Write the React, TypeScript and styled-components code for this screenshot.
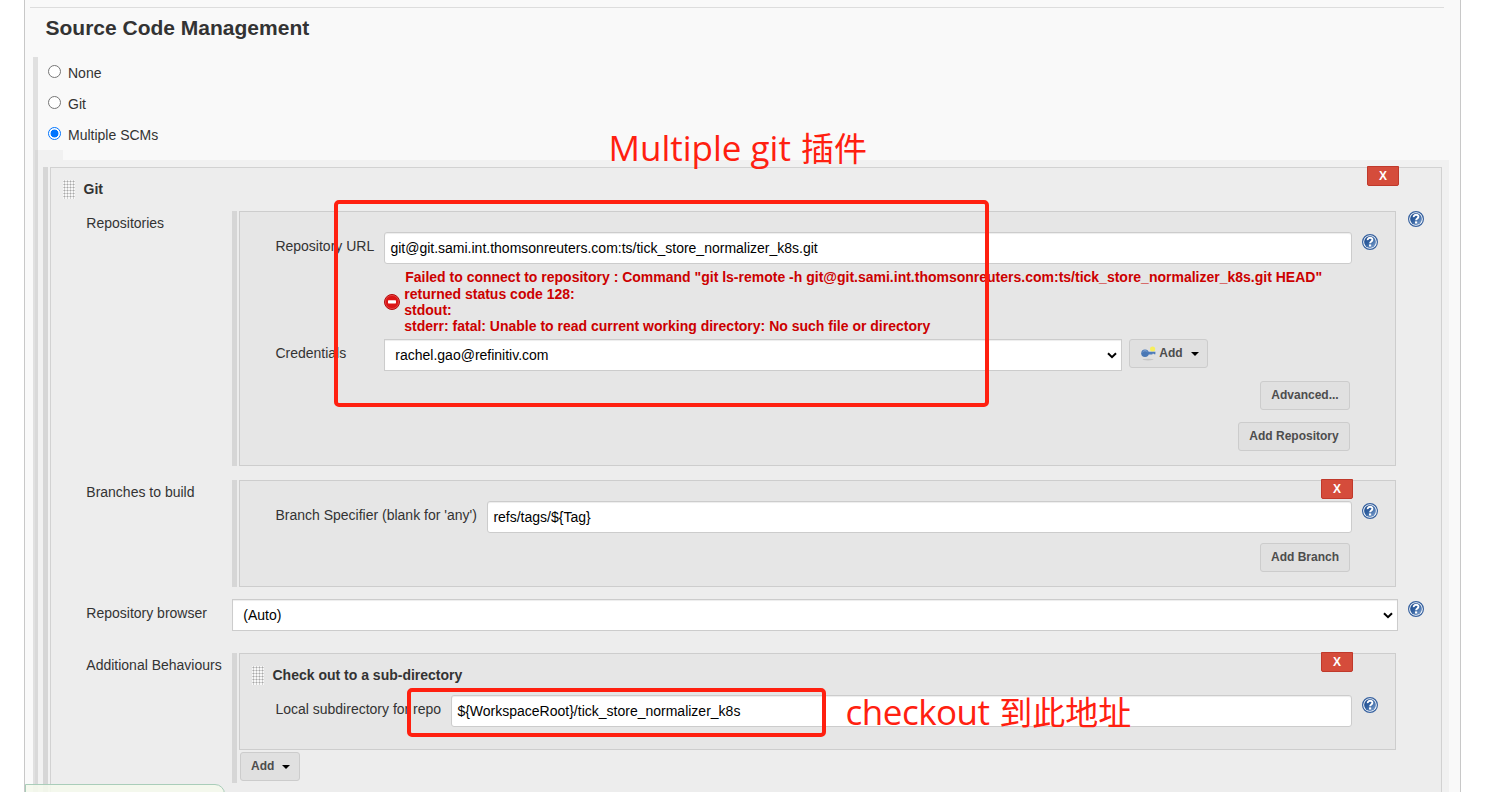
import React from "react";
import styled, { createGlobalStyle, css } from "styled-components";

const Global = createGlobalStyle`
  *, *::before, *::after { box-sizing: border-box; }
  html, body { margin: 0; background: #fff; }
  body {
    font-family: "Liberation Sans", Arial, sans-serif;
    font-size: 14px;
    line-height: 16px;
    color: #333;
    height: 792px;
    overflow: hidden;
  }
`;

const Screen = styled.div`
  position: relative;
  width: 1492px;
  height: 792px;
  overflow: hidden;
  padding: 0 31px 0 24px;
`;

const Panel = styled.main`
  height: 792px;
  overflow: hidden;
  background: #f9f9f9;
  border: solid #c8c8c8;
  border-width: 0 1px;
  padding: 7px 11px 0 5px;
`;

const Rule = styled.hr`
  margin: 0 5px 0 0;
  border: 0;
  height: 1px;
  background: #ddd;
`;

const Title = styled.h2`
  margin: 7px 0 17px 15.5px;
  font-size: 21px;
  line-height: 25px;
  font-weight: bold;
`;

const ScmSection = styled.section`
  margin-left: 3px;
  height: 760px;
  border-left: 5px solid #e0e0e0;
`;

const RadioRow = styled.label`
  display: flex;
  height: 31px;
  padding: 8px 0 0 10px;
  gap: 7px;
`;

const Radio = styled.input`
  appearance: none;
  width: 13px;
  height: 13px;
  margin: 0;
  border: 1px solid #767676;
  border-radius: 50%;
  background: #fff;
  &:checked {
    border-color: #0075ff;
    background: radial-gradient(circle, #0075ff 0 3.6px, #fff 4.3px);
  }
`;

const Nested = styled.div`
  margin-left: -3px;
  width: 1414px;
`;

const NestedLip = styled.div`
  width: 28px;
  height: 10px;
  background: rgba(0, 0, 0, 0.03);
`;

const NestedBody = styled.div`
  display: flex;
  gap: 2px;
  height: 700px;
  padding: 7px 7px 0 8px;
  background: rgba(0, 0, 0, 0.03);
`;

const DragBar = styled.div`
  width: 5px;
  flex: none;
  background: #d6d6d6;
`;

const ScmBox = styled.div`
  flex: 1;
  border: 1px solid #d2d2d2;
  background: #ededed;
  padding: 0 17px 0 12px;
`;

const BoxHeader = styled.div<{ $inner?: boolean }>`
  display: flex;
  align-items: flex-start;
  height: ${(p) => (p.$inner ? 41 : 43)}px;
  padding-top: 12px;
  ${(p) => p.$inner && css`margin-left: -23px;`}
`;

const HeaderTitle = styled.b`
  margin: 1px auto 0 8.5px;
`;

const Grip = styled.span`
  width: 12px;
  height: 19px;
  background: radial-gradient(circle at 1.5px 1.5px, #a8a8a8 0 0.9px, #f8f8f8 1.1px) 0 0 / 3px 3px;
`;

const DeleteButton = styled.button<{ $top: number; $right: number }>`
  flex: none;
  width: 32px;
  height: 20px;
  margin: ${(p) => p.$top}px ${(p) => p.$right}px 0 auto;
  padding: 0 0 1px;
  border: 1px solid #c0392b;
  border-radius: 0 0 2px 2px;
  background: #d54c3b;
  color: #fff;
  font: bold 12px/16px "Liberation Sans", Arial, sans-serif;
`;

const Entry = styled.div<{ $gap?: number }>`
  display: flex;
  align-items: flex-start;
  margin-bottom: ${(p) => p.$gap ?? 0}px;
`;

const EntryLabel = styled.div<{ $top?: number }>`
  width: 169px;
  flex: none;
  padding: ${(p) => p.$top ?? 4}px 0 0 23.3px;
  white-space: nowrap;
`;

const Repeatable = styled.div<{ $height: number }>`
  display: flex;
  width: 1164px;
  gap: 2px;
  height: ${(p) => p.$height}px;
`;

const Stack = styled.div`
  flex: 1;
`;

const InnerBox = styled.div<{ $height: number; $top?: number }>`
  height: ${(p) => p.$height}px;
  border: 1px solid #cdcdcd;
  background: #e6e6e6;
  padding: ${(p) => p.$top ?? 0}px 17px 0 35px;
`;

const Field = styled.div`
  display: flex;
  align-items: flex-start;
`;

const DeleteRow = styled.div`
  display: flex;
  height: 20px;
`;

const FieldLabel = styled.label<{ $width: number }>`
  width: ${(p) => p.$width}px;
  flex: none;
  padding: 6px 0 0 0.4px;
  white-space: nowrap;
`;

const TextBox = styled.input`
  flex: 1;
  min-width: 0;
  height: 32px;
  border: 1px solid #ccc;
  border-radius: 3px;
  box-shadow: inset 0 1px 1px rgba(0, 0, 0, 0.075);
  padding: 0 6px 1px 5.4px;
  background: #fff;
  color: #000;
  font: 14px "Liberation Sans", Arial, sans-serif;
`;

const SelectBox = styled.div<{ $width: number }>`
  display: flex;
  align-items: center;
  justify-content: space-between;
  width: ${(p) => p.$width}px;
  height: 32px;
  flex: none;
  border: 1px solid #ccc;
  box-shadow: inset 0 1px 1px rgba(0, 0, 0, 0.075);
  background: #fff;
  color: #000;
  padding: 0 4px 0 10.3px;
`;

const HelpSlot = styled.span<{ $left: number; $top: number }>`
  width: 16px;
  height: 16px;
  flex: none;
  margin: ${(p) => p.$top}px 0 0 ${(p) => p.$left}px;
  svg { display: block; }
`;

const ErrorRow = styled.div`
  display: flex;
  align-items: flex-start;
  height: 75px;
  padding: 5px 0 0 109px;
  gap: 4.3px;
  color: #c00;
  font-weight: bold;
  line-height: 16px;
  svg { flex: none; margin-top: 25px; }
`;

const ErrorText = styled.div`
  white-space: nowrap;
  div:first-child { line-height: 17px; }
`;

const FirstLine = styled.div`
  padding-left: 0.9px;
`;

const Button = styled.button`
  display: flex;
  align-items: center;
  height: 29px;
  flex: none;
  border: 1px solid #ccc;
  border-radius: 3px;
  background: #e0e0e0;
  color: #4d4d4d;
  font: bold 12px/16px "Liberation Sans", Arial, sans-serif;
  padding: 0 10px 2px;
  white-space: nowrap;
  svg { flex: none; }
`;

const WideButton = styled(Button)<{ $width: number }>`
  width: ${(p) => p.$width}px;
  justify-content: center;
`;

const KeyAddButton = styled(Button)`
  width: 79px;
  margin-left: 7px;
`;

const AddButton = styled(Button)`
  width: 60px;
  margin: 2px 0 0 1px;
`;

const ButtonRow = styled.div<{ $top: number }>`
  display: flex;
  justify-content: flex-end;
  padding: ${(p) => p.$top}px 28px 0 0;
`;

const Caret = styled.span`
  margin: 3px 0 0 8px;
  border: solid transparent;
  border-width: 4px 4px 0;
  border-top-color: #000;
`;

const StatusBar = styled.div`
  position: absolute;
  left: 25px;
  top: 784px;
  width: 200px;
  height: 20px;
  border: 1px solid #a9cdb9;
  border-radius: 0 10px 0 0;
  background: rgba(244, 248, 236, 0.9);
`;

const Frame = styled.div<{ $x: number; $y: number; $w: number; $h: number }>`
  position: absolute;
  left: ${(p) => p.$x}px;
  top: ${(p) => p.$y}px;
  width: ${(p) => p.$w}px;
  height: ${(p) => p.$h}px;
  border: 4px solid #ff2010;
  border-radius: 5px;
`;

const Note = styled.div<{ $x: number; $y: number; $tracking: number }>`
  position: absolute;
  left: ${(p) => p.$x}px;
  top: ${(p) => p.$y}px;
  color: #ff2010;
  font: 35px/44px "Open Sans", "Noto Sans CJK SC", sans-serif;
  letter-spacing: ${(p) => p.$tracking}px;
  white-space: nowrap;
`;

const Cjk = styled.span`
  font-family: "Noto Sans CJK SC", sans-serif;
  font-size: 33px;
  letter-spacing: 0;
  margin-left: 1px;
`;

function HelpIcon({ left, top = 2 }: { left: number; top?: number }) {
  return (
    <HelpSlot $left={left} $top={top}>
      <svg width="16" height="16" viewBox="0 0 16 16">
        <defs>
          <linearGradient id="help" x1="0" y1="0" x2="1" y2="1">
            <stop offset="0" stopColor="#1f4a8c" />
            <stop offset="0.45" stopColor="#31609f" />
            <stop offset="1" stopColor="#86a8d4" />
          </linearGradient>
        </defs>
        <circle cx="8" cy="8" r="7.4" fill="#fff" stroke="#36619f" strokeWidth="1.2" />
        <circle cx="8" cy="8" r="5.9" fill="url(#help)" />
        <path d="M5.7 6.1C5.5 3 10.7 3 10.4 5.9C10.3 7.5 8.1 7.4 8.1 9.3" fill="none" stroke="#fff" strokeWidth="1.9" />
        <rect x="7" y="10.4" width="2.2" height="2.1" fill="#fff" />
      </svg>
    </HelpSlot>
  );
}

function StopIcon() {
  return (
    <svg width="16" height="16" viewBox="0 0 16 16">
      <circle cx="8" cy="8" r="7.5" fill="#db1414" stroke="#b30d0d" />
      <circle cx="8" cy="8" r="6.6" fill="none" stroke="#e85a5a" strokeWidth="0.6" />
      <rect x="4" y="6.2" width="8" height="3.2" rx="0.6" fill="#fff" />
    </svg>
  );
}

function KeyIcon() {
  return (
    <svg width="16" height="16" viewBox="0 0 16 16">
      <ellipse cx="8" cy="14.6" rx="5.5" ry="0.8" fill="#c6c6c6" />
      <circle cx="12.6" cy="4" r="2.6" fill="#f6ee5c" />
      <path d="M7 6.8H15.4V9.2H14V8.8H12.4V9.6H7Z" fill="#4f7dbb" />
      <circle cx="5" cy="8.2" r="3.8" fill="#4a78b5" />
      <path d="M2.6 7C3.6 5.4 6.2 5.2 7.4 6.8" stroke="#84a8d8" fill="none" />
    </svg>
  );
}

function Chevron() {
  return (
    <svg width="10" height="7" viewBox="0 0 10 7">
      <path d="M1 1.2L5 5.2L9 1.2" fill="none" stroke="#000" strokeWidth="2" />
    </svg>
  );
}

export default function App() {
  return (
    <Screen>
      <Global />
      <Panel>
        <Rule />
        <Title>Source Code Management</Title>
        <ScmSection>
          {["None", "Git", "Multiple SCMs"].map((name) => (
            <RadioRow key={name}>
              <Radio type="radio" name="scm" defaultChecked={name === "Multiple SCMs"} />
              <span>{name}</span>
            </RadioRow>
          ))}
          <Nested>
            <NestedLip />
            <NestedBody>
              <DragBar />
              <ScmBox>
                <BoxHeader>
                  <Grip />
                  <HeaderTitle>Git</HeaderTitle>
                  <DeleteButton $top={-14} $right={25}>X</DeleteButton>
                </BoxHeader>

                <Entry $gap={14}>
                  <EntryLabel>Repositories</EntryLabel>
                  <Repeatable $height={255}>
                    <DragBar />
                    <Stack>
                      <InnerBox $height={255} $top={20}>
                        <Field>
                          <FieldLabel $width={109}>Repository URL</FieldLabel>
                          <TextBox defaultValue="git@git.sami.int.thomsonreuters.com:ts/tick_store_normalizer_k8s.git" />
                          <HelpIcon left={10} />
                        </Field>
                        <ErrorRow>
                          <StopIcon />
                          <ErrorText>
                            <FirstLine>
                              Failed to connect to repository : Command "git ls-remote -h git@git.sami.int.thomsonreuters.com:ts/tick_store_normalizer_k8s.git HEAD"
                            </FirstLine>
                            <div>returned status code 128:</div>
                            <div>stdout:</div>
                            <div>stderr: fatal: Unable to read current working directory: No such file or directory</div>
                          </ErrorText>
                        </ErrorRow>
                        <Field>
                          <FieldLabel $width={109}>Credentials</FieldLabel>
                          <SelectBox $width={738}>rachel.gao@refinitiv.com<Chevron /></SelectBox>
                          <KeyAddButton><KeyIcon /><span>&nbsp;Add</span><Caret /></KeyAddButton>
                        </Field>
                        <ButtonRow $top={10}><WideButton $width={90}>Advanced...</WideButton></ButtonRow>
                        <ButtonRow $top={12}><WideButton $width={112}>Add Repository</WideButton></ButtonRow>
                      </InnerBox>
                    </Stack>
                  </Repeatable>
                  <HelpIcon left={12} top={0} />
                </Entry>

                <Entry $gap={12}>
                  <EntryLabel>Branches to build</EntryLabel>
                  <Repeatable $height={107}>
                    <DragBar />
                    <Stack>
                      <InnerBox $height={107}>
                        <DeleteRow><DeleteButton $top={-2} $right={25}>X</DeleteButton></DeleteRow>
                        <Field>
                          <FieldLabel $width={212}>Branch Specifier (blank for 'any')</FieldLabel>
                          <TextBox defaultValue="refs/tags/${Tag}" />
                          <HelpIcon left={10} />
                        </Field>
                        <ButtonRow $top={10}><WideButton $width={90}>Add Branch</WideButton></ButtonRow>
                      </InnerBox>
                    </Stack>
                  </Repeatable>
                </Entry>

                <Entry $gap={22}>
                  <EntryLabel $top={6}>Repository browser</EntryLabel>
                  <SelectBox $width={1166}>(Auto)<Chevron /></SelectBox>
                  <HelpIcon left={10} />
                </Entry>

                <Entry>
                  <EntryLabel>Additional Behaviours</EntryLabel>
                  <Repeatable $height={130}>
                    <DragBar />
                    <Stack>
                      <InnerBox $height={97}>
                        <BoxHeader $inner>
                          <Grip />
                          <HeaderTitle>Check out to a sub-directory</HeaderTitle>
                          <DeleteButton $top={-14} $right={25}>X</DeleteButton>
                        </BoxHeader>
                        <Field>
                          <FieldLabel $width={176}>Local subdirectory for repo</FieldLabel>
                          <TextBox defaultValue="${WorkspaceRoot}/tick_store_normalizer_k8s" />
                          <HelpIcon left={10} />
                        </Field>
                      </InnerBox>
                      <AddButton>Add<Caret /></AddButton>
                    </Stack>
                  </Repeatable>
                </Entry>
              </ScmBox>
            </NestedBody>
          </Nested>
        </ScmSection>
      </Panel>
      <StatusBar />
      <Frame $x={334} $y={200} $w={655} $h={207} />
      <Frame $x={407} $y={688} $w={419} $h={49} />
      <Note $x={608.5} $y={125} $tracking={0}>Multiple git <Cjk>插件</Cjk></Note>
      <Note $x={845.5} $y={689} $tracking={-0.5}>checkout <Cjk>到此地址</Cjk></Note>
    </Screen>
  );
}
